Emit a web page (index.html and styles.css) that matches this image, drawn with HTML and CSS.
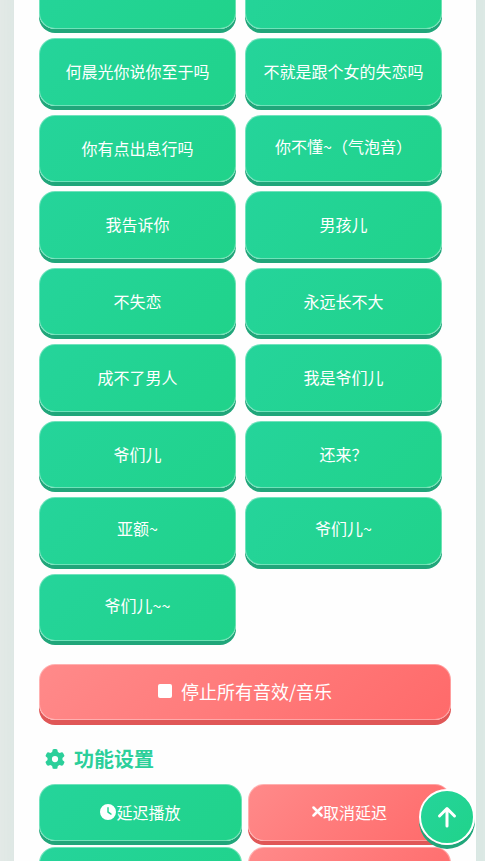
FILE: index.html
```html
<!DOCTYPE html>
<html lang="zh-CN">
<head>
<meta charset="utf-8">
<meta name="viewport" content="width=device-width, initial-scale=1">
<title>音效</title>
<link rel="stylesheet" href="styles.css">
</head>
<body>
<main class="card">
  <section class="sounds">
    <button class="btn" type="button"></button>
    <button class="btn" type="button"></button>
    <button class="btn" type="button">何晨光你说你至于吗</button>
    <button class="btn" type="button">不就是跟个女的失恋吗</button>
    <button class="btn" type="button">你有点出息行吗</button>
    <button class="btn drawl" type="button">你不懂~（气泡音）</button>
    <button class="btn" type="button">我告诉你</button>
    <button class="btn" type="button">男孩儿</button>
    <button class="btn" type="button">不失恋</button>
    <button class="btn" type="button">永远长不大</button>
    <button class="btn" type="button">成不了男人</button>
    <button class="btn" type="button">我是爷们儿</button>
    <button class="btn" type="button">爷们儿</button>
    <button class="btn" type="button">还来？</button>
    <button class="btn drawl" type="button">亚额~</button>
    <button class="btn drawl" type="button">爷们儿~</button>
    <button class="btn drawl" type="button">爷们儿~~</button>
  </section>
  <button class="btn danger stop" type="button">
    <svg class="icon-stop" viewBox="0 0 14 14" aria-hidden="true"><rect width="14" height="14" rx="2"/></svg>
    停止所有音效/音乐
  </button>
  <h2 class="title">
    <svg class="icon-gear" viewBox="0 0 512 512" aria-hidden="true"><path d="M495.900 166.600c3.200 8.700.5 18.400-6.400 24.600l-43.300 39.400c1.100 8.300 1.700 16.800 1.700 25.400s-.6 17.100-1.700 25.400l43.300 39.400c6.900 6.200 9.600 15.900 6.400 24.600-4.400 11.900-9.700 23.300-15.800 34.300l-4.700 8.100c-6.600 11-14 21.400-22.100 31.200-5.900 7.200-15.700 9.600-24.500 6.800l-55.700-17.700c-13.400 10.300-28.200 18.900-44 25.400l-12.500 57.100c-2 9.100-9 16.300-18.200 17.800-13.800 2.300-28 3.500-42.500 3.500s-28.700-1.200-42.500-3.500c-9.200-1.500-16.200-8.700-18.200-17.800l-12.500-57.100c-15.800-6.500-30.600-15.100-44-25.400l-55.600 17.800c-8.800 2.800-18.600.3-24.500-6.800-8.100-9.800-15.500-20.200-22.100-31.200l-4.700-8.100c-6.100-11-11.400-22.400-15.800-34.300-3.200-8.700-.5-18.400 6.400-24.600l43.300-39.400c-1.100-8.400-1.700-16.900-1.700-25.500s.6-17.100 1.700-25.400l-43.300-39.400c-6.900-6.200-9.600-15.900-6.400-24.600 4.400-11.900 9.700-23.300 15.800-34.300l4.700-8.100c6.600-11 14-21.400 22.100-31.200 5.900-7.200 15.700-9.600 24.500-6.800l55.700 17.700c13.400-10.300 28.200-18.900 44-25.400l12.500-57.100c2-9.100 9-16.300 18.200-17.800C227.300 1.200 241.500 0 256 0s28.700 1.200 42.500 3.500c9.200 1.500 16.200 8.700 18.200 17.800l12.500 57.100c15.800 6.500 30.600 15.100 44 25.400l55.700-17.700c8.800-2.800 18.600-.3 24.500 6.800 8.100 9.800 15.500 20.200 22.100 31.200l4.700 8.100c6.100 11 11.400 22.400 15.700 34.300zM256 336a80 80 0 1 0 0-160 80 80 0 1 0 0 160z"/></svg>
    功能设置
  </h2>
  <section class="settings">
    <button class="btn" type="button"><svg class="icon-clock" viewBox="0 0 512 512" aria-hidden="true"><path d="M256 0a256 256 0 1 1 0 512A256 256 0 1 1 256 0zM232 120v136c0 8 4 15.500 10.700 20l96 64c11 7.400 25.900 4.400 33.300-6.700s4.400-25.900-6.700-33.300L280 243.200V120c0-13.300-10.700-24-24-24s-24 10.700-24 24z"/></svg>延迟播放</button>
    <button class="btn danger" type="button"><svg class="icon-close" viewBox="0 0 11 11" aria-hidden="true"><path d="M1.500 1.500l8 8M9.500 1.500l-8 8"/></svg>取消延迟</button>
    <button class="btn" type="button"></button>
    <button class="btn danger" type="button"></button>
  </section>
</main>
<a class="to-top" href="#" aria-label="返回顶部">
  <svg class="icon-up" viewBox="0 0 20 22" aria-hidden="true"><path d="M10 20V3M2.500 10L10 2.500l7.500 7.500"/></svg>
</a>
</body>
</html>
```
FILE: styles.css
```css
* {
  box-sizing: border-box;
}

body {
  margin: 0;
  height: 100vh;
  overflow: hidden;
  background: linear-gradient(90deg, #e5eae8, #e0eae7);
  font-family: "Noto Sans CJK SC", sans-serif;
}

.card {
  margin: -38px 9px 0 14px;
  padding: 0 25px 40px;
  background: #fefefe;
  box-shadow: 0 10px 30px rgba(32, 166, 122, 0.06);
}

.sounds {
  display: grid;
  grid-template-columns: 1fr 1fr;
  grid-auto-rows: 67px 68px;
  gap: 9px;
  margin-right: 9px;
}

.btn {
  display: flex;
  align-items: center;
  justify-content: center;
  padding: 0 12px 2px;
  border: 1px solid rgba(255, 255, 255, 0.35);
  border-radius: 16px;
  background: linear-gradient(135deg, #25d49b, #20d38a) border-box;
  box-shadow: 0 4px 0 #20a67a;
  color: #fff;
  font-family: inherit;
  font-size: 16px;
  font-weight: 400;
  line-height: 24px;
}

.drawl {
  padding-bottom: 6px;
}

.danger {
  background: linear-gradient(135deg, #ff8a8a, #ff6a6a) border-box;
  box-shadow: 0 4px 0 #e05757;
}

.stop {
  width: 100%;
  height: 56px;
  margin-top: 23px;
  gap: 9px;
  box-shadow: 0 5px 0 #e05757;
  font-size: 18px;
}

.title {
  display: flex;
  align-items: center;
  gap: 9px;
  margin: 25px 0 11px;
  padding-left: 6px;
  color: #2bcf9a;
  font-size: 20px;
  font-weight: 700;
  line-height: 28px;
}

.settings {
  display: grid;
  grid-template-columns: 1fr 1fr;
  grid-auto-rows: 57px;
  gap: 6px;
}

svg {
  flex: none;
  fill: currentColor;
}

.icon-stop {
  width: 14px;
  height: 14px;
}

.icon-gear {
  width: 20px;
  height: 20px;
}

.icon-clock {
  width: 16px;
  height: 16px;
}

.icon-close {
  width: 11px;
  height: 11px;
  fill: none;
  stroke: currentColor;
  stroke-width: 2.5;
  stroke-linecap: round;
}

.to-top {
  position: fixed;
  right: 10px;
  bottom: 16px;
  display: flex;
  align-items: center;
  justify-content: center;
  width: 56px;
  height: 56px;
  border: 2px solid #fff;
  border-radius: 50%;
  background: linear-gradient(135deg, #25d49b, #20d38a);
  box-shadow: 0 4px 0 #20a67a;
  color: #fff;
}

.icon-up {
  width: 20px;
  height: 22px;
  fill: none;
  stroke: currentColor;
  stroke-width: 3;
  stroke-linecap: round;
  stroke-linejoin: round;
}
```
